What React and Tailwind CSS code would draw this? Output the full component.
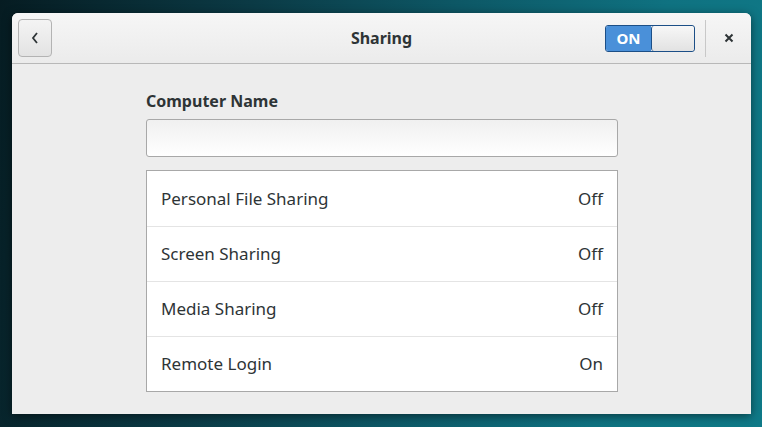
import React from "react";

const rows = [
  ["Personal File Sharing", "Off"],
  ["Screen Sharing", "Off"],
  ["Media Sharing", "Off"],
  ["Remote Login", "On"],
];

export default function App() {
  return (
    <div
      className="w-[762px] h-[427px] overflow-hidden pt-[13px] pl-[12px]"
      style={{
        background:
          "linear-gradient(100deg, #061c22 0%, #0b3a45 30%, #0d5866 55%, #0f7281 80%, #0f7a88 100%)",
        fontFamily: '"Noto Sans", "Open Sans", sans-serif',
      }}
    >
      <div className="w-[739px] h-[401px] bg-[#ededed] rounded-t-[6px] flex flex-col shadow-[0_2px_10px_rgba(0,0,0,0.5)]">
        {/* header */}
        <div className="h-[51px] flex items-center rounded-t-[6px] bg-gradient-to-b from-[#f6f6f6] to-[#ebebeb] border-b border-[#b8b8b8] relative">
          <button className="ml-[6px] w-[34px] h-[38px] rounded-[4px] border border-[#b3b3b3] bg-gradient-to-b from-[#f4f4f4] to-[#e3e3e3] flex items-center justify-center">
            <svg width="10" height="14" viewBox="0 0 10 14">
              <path d="M7 2 L3 7 L7 12" fill="none" stroke="#2e3436" strokeWidth="1.8" />
            </svg>
          </button>
          <div className="absolute left-0 right-0 text-center text-[16px] font-bold text-[#2e3436] pointer-events-none">
            Sharing
          </div>
          <div className="ml-auto flex items-center">
            <div className="w-[90px] h-[27px] rounded-[3px] border border-[#1c4f87] flex overflow-hidden">
              <div className="w-[45px] bg-[#4a90d9] text-white font-bold text-[15px] flex items-center justify-center">
                ON
              </div>
              <div className="flex-1 bg-gradient-to-b from-[#f7f7f7] to-[#e2e2e2] border-l border-[#1c4f87] rounded-[3px]" />
            </div>
            <div className="ml-[10px] w-px h-[37px] bg-[#c8c8c8]" />
            <div className="w-[45px] flex items-center justify-center">
              <svg width="10" height="10" viewBox="0 0 10 10">
                <path d="M1.5 1.5 L8.5 8.5 M8.5 1.5 L1.5 8.5" stroke="#2e3436" strokeWidth="2" />
              </svg>
            </div>
          </div>
        </div>
        {/* content */}
        <div className="pl-[134px] w-[606px] pt-[26px]">
          <div className="text-[16px] font-bold text-[#2e3436] leading-[22px]">
            Computer Name
          </div>
          <div className="mt-[7px] h-[38px] rounded-[3px] border border-[#a8a8a8] bg-gradient-to-b from-[#f0f0f0] to-white" />
          <div className="mt-[13px] border border-[#a8a8a8] bg-white">
            {rows.map(([l, r], i) => (
              <div
                key={l}
                className={`h-[55px] flex items-center justify-between px-[14px] text-[17px] text-[#2e3436] ${
                  i > 0 ? "border-t border-[#e4e4e4]" : ""
                }`}
              >
                <span>{l}</span>
                <span>{r}</span>
              </div>
            ))}
          </div>
        </div>
      </div>
    </div>
  );
}
